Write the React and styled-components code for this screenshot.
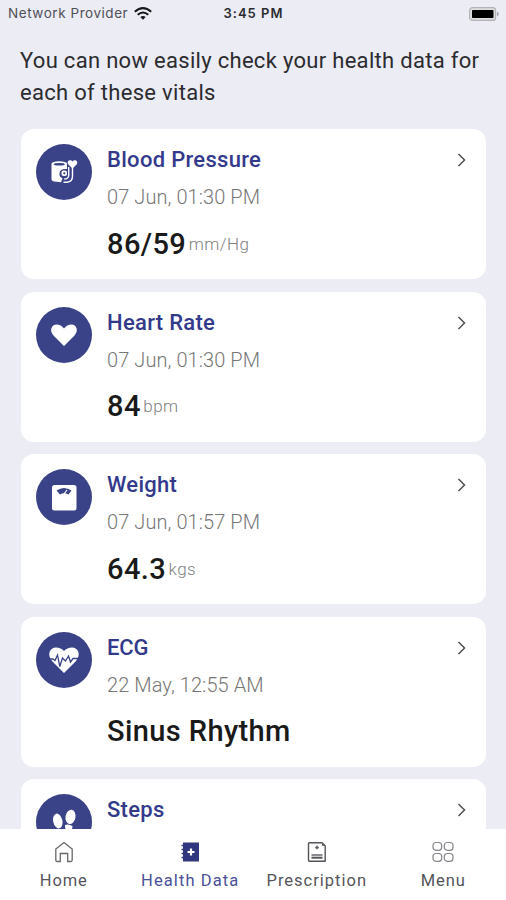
import React from 'react';
import styled, { createGlobalStyle } from 'styled-components';

const GlobalStyle = createGlobalStyle`
  * {
    box-sizing: border-box;
  }

  body {
    margin: 0;
    font-family: Roboto, sans-serif;
  }
`;

const Screen = styled.div`
  width: 506px;
  height: 900px;
  display: flex;
  flex-direction: column;
  overflow: hidden;
  background: #ebecf4;
`;

const StatusBar = styled.header`
  flex: none;
  height: 27px;
  padding: 0 7px 0 8px;
  display: grid;
  grid-template-columns: 1fr auto 1fr;
  align-items: center;
  font-family: Inter, sans-serif;
  font-size: 13.5px;
  line-height: 27px;
  color: #505058;
`;

const Carrier = styled.div`
  display: flex;
  align-items: center;
  gap: 6px;
  letter-spacing: 0.55px;
`;

const Clock = styled.div`
  font-size: 13px;
  font-weight: 600;
  letter-spacing: 1px;
  color: #2c2c32;
`;

const Battery = styled.div`
  display: flex;
  justify-content: flex-end;
`;

const Content = styled.main`
  flex: 1;
  min-height: 0;
  overflow: hidden;
  padding: 18px 20px 0 21px;
`;

const Intro = styled.p`
  margin: 0 -10px 21px -1px;
  font-size: 22px;
  line-height: 31.5px;
  letter-spacing: 0.3px;
  color: #2b2b30;
`;

const CardList = styled.div`
  display: flex;
  flex-direction: column;
  gap: 12.6px;
`;

const Card = styled.section`
  height: 150px;
  padding: 15px 20px 0 15px;
  display: flex;
  align-items: flex-start;
  border-radius: 13px;
  background: #fff;
`;

const Badge = styled.div`
  flex: none;
  width: 56px;
  height: 56px;
  margin-right: 15px;
  border-radius: 50%;
  background: #3b4388;
`;

const Details = styled.div`
  flex: 1;
`;

const Title = styled.h2`
  margin: 0;
  font-size: 22px;
  font-weight: 500;
  line-height: 32px;
  letter-spacing: ${(props) => props.$spacing || '0.3px'};
  color: #333a8b;
`;

const Time = styled.div`
  margin-top: 5px;
  font-size: 20px;
  font-weight: 300;
  line-height: 32px;
  letter-spacing: 0.08px;
  color: #777;
`;

const Reading = styled.div`
  margin-top: 12.5px;
  display: flex;
  align-items: center;
  gap: 2.5px;
  line-height: 36px;
`;

const Value = styled.span`
  font-size: 29px;
  font-weight: 500;
  letter-spacing: 0.4px;
  color: #1a1a1a;
`;

const Unit = styled.span`
  font-size: 17px;
  font-weight: 300;
  letter-spacing: 0.45px;
  color: #808080;
`;

const Chevron = styled.svg`
  flex: none;
  width: 9px;
  height: 14px;
  margin-top: 9px;
`;

const NavBar = styled.nav`
  flex: none;
  height: 71px;
  padding-top: 12px;
  display: grid;
  grid-template-columns: repeat(4, 1fr);
  background: #fff;
`;

const NavItem = styled.div`
  display: flex;
  flex-direction: column;
  align-items: center;
  gap: 7px;
  padding-left: 1px;
  font-size: 16.5px;
  line-height: 22px;
  letter-spacing: ${(props) => props.$spacing};
  white-space: nowrap;
  color: ${(props) => (props.$active ? '#4a5099' : '#55555a')};

  svg {
    width: 24px;
    height: 22px;
  }
`;

// Badge glyphs share a 56x56 box
const glyphs = {
  pressure: (
    <>
      <path d="M15.500 20v15q0 2 3 2.500l6.500.7l1.500-4q-3.500-1.200-3-5t4.500-4.200h3v-5z" fill="#fff" />
      <ellipse cx="23.300" cy="20" rx="7.800" ry="2.700" fill="#fff" />
      <ellipse cx="23.300" cy="20.300" rx="5.600" ry="1.300" fill="#3b4388" />
      <rect x="25.500" y="26.500" width="5.500" height="5.500" rx="2" fill="#fff" />
      <circle cx="28.300" cy="29.300" r="1.100" fill="#3b4388" />
      <path d="M27.500 38.200h3.500q5.500-.5 5.500-6V23M32.700 23v8.500q-.3 3.500-4.500 3.500" fill="none" stroke="#fff" strokeWidth="1.400" />
      <path d="M36.500 24.500l-4.300-4.300c-2-3 2.300-5.400 4.300-2.700c2-2.700 6.300-.3 4.300 2.700z" fill="#fff" />
    </>
  ),
  heart: (
    <path d="M28 39L17.500 28.500C13 23.500 15.500 17.500 20.500 17.500Q25 17.500 28 21.500Q31 17.500 35.500 17.500C40.500 17.500 43 23.500 38.500 28.500z" fill="#fff" />
  ),
  scale: (
    <>
      <rect x="16" y="16" width="24.500" height="25.500" rx="2.500" fill="#fff" />
      <path d="M20.500 21.500Q28 16.500 35.500 21.500L32.500 25.500Q28 23 24 25.500z" fill="#3b4388" />
      <path d="M28 25l3-4" stroke="#fff" strokeWidth="1.200" />
    </>
  ),
  ecg: (
    <>
      <path d="M28 41L16 29C10.500 22 14 15.500 20 15.500Q25 15.500 28 19Q31 15.500 36 15.500C42 15.500 45.500 22 40 29z" fill="#fff" />
      <path d="M13 27h4l2 1.500 2.500-5.500 2.300 11.500 2.700-8.500 3 3 3-5 2 6 2.500-3.500h5.500" fill="none" stroke="#3b4388" strokeWidth="1.300" />
    </>
  ),
  steps: (
    <>
      <ellipse cx="21.800" cy="27" rx="4.600" ry="7.500" transform="rotate(-12 21.800 27)" fill="#fff" />
      <ellipse cx="34.500" cy="22.800" rx="5" ry="7.200" transform="rotate(10 34.500 22.800)" fill="#fff" />
      <path d="M29 31q3.500-1.500 7.500 1q-.5 6-4 6t-3.500-7zM21 36.500l6-1q1.500 6-2 6.500t-4-5.500z" fill="#fff" />
    </>
  ),
};

const navIcons = {
  home: (
    <path d="M3.800 8L12 1.500 20.200 8V19q0 1.500-1.500 1.500h-3V12.500H8.300v8h-3Q3.800 20.500 3.800 19z" fill="none" stroke="#68686c" strokeWidth="1.300" />
  ),
  health: (
    <>
      <path d="M5 1.500h16v19H5z" fill="#30377f" />
      <path d="M3.500 4.500h3M3.500 8.500h3M3.500 12.500h3M3.500 16.500h3" stroke="#30377f" strokeWidth="1.500" />
      <path d="M13 7.500v7M9.500 11h7" stroke="#fff" strokeWidth="2.200" />
    </>
  ),
  prescription: (
    <>
      <path d="M4.500 1.700h12.500l3.200 3V20.300H4.500q-1 0-1-1V2.700q0-1 1-1z" fill="none" stroke="#545458" strokeWidth="1.400" strokeLinejoin="round" />
      <path d="M17 2v2.800h3z" fill="#545458" />
      <path d="M10.200 6.500h3.600M12 4.800v3.400" stroke="#66666a" strokeWidth="1.700" />
      <path d="M6.500 14h11" stroke="#77777b" strokeWidth="1.700" />
      <path d="M6.500 16.700h11" stroke="#545458" strokeWidth="2" />
    </>
  ),
  menu: (
    <g fill="none" stroke="#85858a" strokeWidth="1.200">
      <rect x="2" y="1.500" width="8.700" height="7.800" rx="3" />
      <rect x="13.300" y="1.500" width="8.700" height="7.800" rx="3" />
      <rect x="2" y="12.500" width="8.700" height="7.800" rx="3" />
      <rect x="13.300" y="12.500" width="8.700" height="7.800" rx="3" />
    </g>
  ),
};

const vitals = [
  { icon: 'pressure', title: 'Blood Pressure', time: '07 Jun, 01:30 PM', value: '86/59', unit: 'mm/Hg' },
  { icon: 'heart', title: 'Heart Rate', time: '07 Jun, 01:30 PM', value: '84', unit: 'bpm' },
  { icon: 'scale', title: 'Weight', time: '07 Jun, 01:57 PM', value: '64.3', unit: 'kgs' },
  { icon: 'ecg', title: 'ECG', time: '22 May, 12:55 AM', value: 'Sinus Rhythm', spacing: '-0.1px' },
  { icon: 'steps', title: 'Steps' },
];

const tabs = [
  { icon: 'home', label: 'Home', spacing: '0.9px' },
  { icon: 'health', label: 'Health Data', spacing: '1.1px', active: true },
  { icon: 'prescription', label: 'Prescription', spacing: '1px' },
  { icon: 'menu', label: 'Menu', spacing: '0.9px' },
];

const VitalCard = ({ icon, title, time, value, unit, spacing }) => (
  <Card>
    <Badge>
      <svg width="56" height="56" viewBox="0 0 56 56">{glyphs[icon]}</svg>
    </Badge>
    <Details>
      <Title $spacing={spacing}>{title}</Title>
      {time && <Time>{time}</Time>}
      {value && (
        <Reading>
          <Value>{value}</Value>
          {unit && <Unit>{unit}</Unit>}
        </Reading>
      )}
    </Details>
    <Chevron viewBox="0 0 9 14">
      <path d="M1.500 1l6 6-6 6" fill="none" stroke="#505050" strokeWidth="1.500" />
    </Chevron>
  </Card>
);

const App = () => (
  <>
    <GlobalStyle />
    <Screen>
      <StatusBar>
        <Carrier>
          Network Provider
          <svg width="18" height="13" viewBox="0 0 18 13">
            <path d="M.8 4.700Q9-2.500 17.200 4.700M3.700 7.800Q9 3.300 14.300 7.800" fill="none" stroke="#17171b" strokeWidth="2" />
            <path d="M9 12.700L6.300 10Q9 7.800 11.700 10z" fill="#17171b" />
          </svg>
        </Carrier>
        <Clock>3:45 PM</Clock>
        <Battery>
          <svg width="30" height="14" viewBox="0 0 30 14">
            <rect x=".6" y=".6" width="26" height="12.800" rx="3" fill="#dededf" stroke="#b4b4b8" strokeWidth="1.200" />
            <rect x="3" y="3" width="21.500" height="8" rx=".8" fill="#000" />
            <path d="M28 4.800q1.800.8 1.800 2.200T28 9.200z" fill="#a0a0a4" />
          </svg>
        </Battery>
      </StatusBar>
      <Content>
        <Intro>
          You can now easily check your health data for
          <br />
          each of these vitals
        </Intro>
        <CardList>
          {vitals.map((item) => (
            <VitalCard key={item.title} {...item} />
          ))}
        </CardList>
      </Content>
      <NavBar>
        {tabs.map((tab) => (
          <NavItem key={tab.label} $active={tab.active} $spacing={tab.spacing}>
            <svg viewBox="0 0 24 22">{navIcons[tab.icon]}</svg>
            {tab.label}
          </NavItem>
        ))}
      </NavBar>
    </Screen>
  </>
);

export default App;
